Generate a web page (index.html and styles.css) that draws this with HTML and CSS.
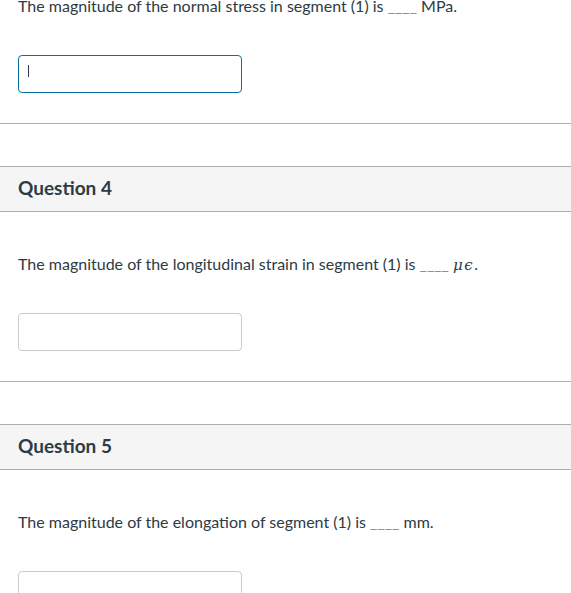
FILE: index.html
```html
<!DOCTYPE html>
<html>
<head>
<meta charset="utf-8">
<link rel="stylesheet" href="styles.css">
</head>
<body>
<div class="quiz">
  <section class="question first">
    <div class="q-body">
      <p class="q-text">The magnitude of the normal stress in segment (1) is <span class="blank">____</span> MPa.</p>
      <div class="field focused"><div class="answer"></div><span class="caret"></span></div>
    </div>
  </section>

  <section class="question">
    <div class="q-header">Question 4</div>
    <div class="q-body">
      <p class="q-text">The magnitude of the longitudinal strain in segment (1) is <span class="blank">____</span> <span class="math">μϵ</span>.</p>
      <div class="field"><div class="answer"></div></div>
    </div>
  </section>

  <section class="question">
    <div class="q-header">Question 5</div>
    <div class="q-body">
      <p class="q-text">The magnitude of the elongation of segment (1) is <span class="blank">____</span> mm.</p>
      <div class="field"><div class="answer"></div></div>
    </div>
  </section>
</div>
</body>
</html>
```
FILE: styles.css
```css
html, body {
  margin: 0;
  padding: 0;
  background: #ffffff;
  overflow: hidden;
}
body {
  font-family: Lato, "Noto Sans", sans-serif;
  color: #2d3b45;
  width: 571px;
  height: 593px;
}
.quiz {
  display: flex;
  flex-direction: column;
  gap: 42px;
}
.question {
  border-bottom: 1px solid #adadad;
}
.question.first {
  margin-top: -6px;
}
.question.first .q-body {
  padding-top: 0;
}
.q-header {
  box-sizing: border-box;
  height: 46px;
  border-top: 1px solid #adadad;
  border-bottom: 1px solid #adadad;
  background: #f5f5f5;
  padding: 0 18px 3px;
  display: flex;
  align-items: center;
  font-size: 19px;
  font-weight: 700;
  color: #2d3b45;
}
.q-body {
  padding: 40px 18px 30px;
}
.q-text {
  margin: 0;
  font-size: 16px;
  line-height: 24px;
  height: 24px;
  white-space: nowrap;
}
.blank {
  color: #8a9199;
}
.math {
  font-family: "DejaVu Serif", "Liberation Serif", serif;
  font-style: italic;
  font-size: 15px;
  letter-spacing: 1.5px;
}
.field {
  position: relative;
  margin-top: 37px;
  width: 224px;
}
.answer {
  box-sizing: border-box;
  height: 38px;
  width: 224px;
  border: 1px solid #c7cdd1;
  border-radius: 4px;
  background: #fff;
}
.field.focused .answer {
  border-color: #0770a3;
}
.caret {
  position: absolute;
  left: 10px;
  top: 10px;
  width: 1px;
  height: 12px;
  background: #2d3b45;
}
```
